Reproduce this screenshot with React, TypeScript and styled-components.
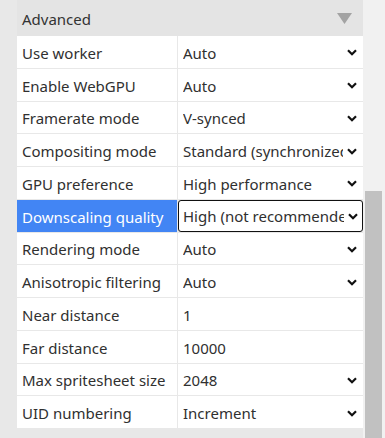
import React from 'react';
import styled, { createGlobalStyle } from 'styled-components';

const GlobalStyle = createGlobalStyle`
  html, body {
    margin: 0;
    padding: 0;
    background: #e8e8e8;
    font-family: "Noto Sans", "Open Sans", sans-serif;
  }
`;

const Page = styled.div`
  display: flex;
  width: 385px;
  height: 438px;
  overflow: hidden;
`;

const Panel = styled.div`
  flex: 1;
  padding: 0 0 10px 17px;
  display: flex;
  flex-direction: column;
`;

const Header = styled.div`
  height: 36px;
  display: flex;
  align-items: center;
  justify-content: space-between;
  padding: 1px 11px 0 5px;
  box-sizing: border-box;
  background: #e4e4e4;
  color: #333;
  font-size: 15px;
`;

const Table = styled.div`
  display: grid;
  grid-template-columns: 160px 1fr;
  grid-auto-rows: 31.75px;
  gap: 1px;
`;

const Label = styled.div<{ $active?: boolean }>`
  display: flex;
  align-items: center;
  padding: 2px 0 0 5px;
  font-size: 15px;
  white-space: nowrap;
  overflow: hidden;
  background: ${(p) => (p.$active ? '#4285f4' : '#fff')};
  color: ${(p) => (p.$active ? '#fff' : '#303030')};
`;

const Value = styled.div<{ $focused?: boolean }>`
  display: flex;
  align-items: center;
  gap: 4px;
  padding: ${(p) => (p.$focused ? '1px 4px 0 4px' : '2px 6px 0 5px')};
  background: #fff;
  font-size: 15px;
  color: #303030;
  white-space: nowrap;
  overflow: hidden;
  box-sizing: border-box;
  border: ${(p) => (p.$focused ? '1.5px solid #111' : 'none')};
  border-radius: ${(p) => (p.$focused ? '3px' : '0')};
`;

const ValueText = styled.span`
  flex: 1;
  overflow: hidden;
`;

const Scrollbar = styled.div`
  width: 22px;
  background: #f1f1f1;
  display: flex;
  flex-direction: column;
  padding-left: 2px;
  box-sizing: border-box;
`;

const Thumb = styled.div`
  margin-top: 191px;
  width: 17px;
  flex: 1;
  background: #c1c1c1;
`;

const Chevron = () => (
  <svg width="10" height="7" viewBox="0 0 10 7" style={{ flexShrink: 0 }}>
    <path d="M1 1.2 L5 5.2 L9 1.2" fill="none" stroke="#111" strokeWidth="2.2" />
  </svg>
);

const Triangle = () => (
  <svg width="15" height="11" viewBox="0 0 15 11">
    <path d="M0 0 H15 L7.5 11 Z" fill="#a3a3a3" />
  </svg>
);

type Row = { label: string; value: string; select: boolean; active?: boolean };

const rows: Row[] = [
  { label: 'Use worker', value: 'Auto', select: true },
  { label: 'Enable WebGPU', value: 'Auto', select: true },
  { label: 'Framerate mode', value: 'V-synced', select: true },
  { label: 'Compositing mode', value: 'Standard (synchronized)', select: true },
  { label: 'GPU preference', value: 'High performance', select: true },
  { label: 'Downscaling quality', value: 'High (not recommended)', select: true, active: true },
  { label: 'Rendering mode', value: 'Auto', select: true },
  { label: 'Anisotropic filtering', value: 'Auto', select: true },
  { label: 'Near distance', value: '1', select: false },
  { label: 'Far distance', value: '10000', select: false },
  { label: 'Max spritesheet size', value: '2048', select: true },
  { label: 'UID numbering', value: 'Increment', select: true },
];

export default function App() {
  return (
    <>
      <GlobalStyle />
      <Page>
        <Panel>
          <Header>
            <span>Advanced</span>
            <Triangle />
          </Header>
          <Table>
            {rows.map((r) => (
              <React.Fragment key={r.label}>
                <Label $active={r.active}>{r.label}</Label>
                <Value $focused={r.active}>
                  <ValueText>{r.value}</ValueText>
                  {r.select && <Chevron />}
                </Value>
              </React.Fragment>
            ))}
          </Table>
        </Panel>
        <Scrollbar>
          <Thumb />
        </Scrollbar>
      </Page>
    </>
  );
}
